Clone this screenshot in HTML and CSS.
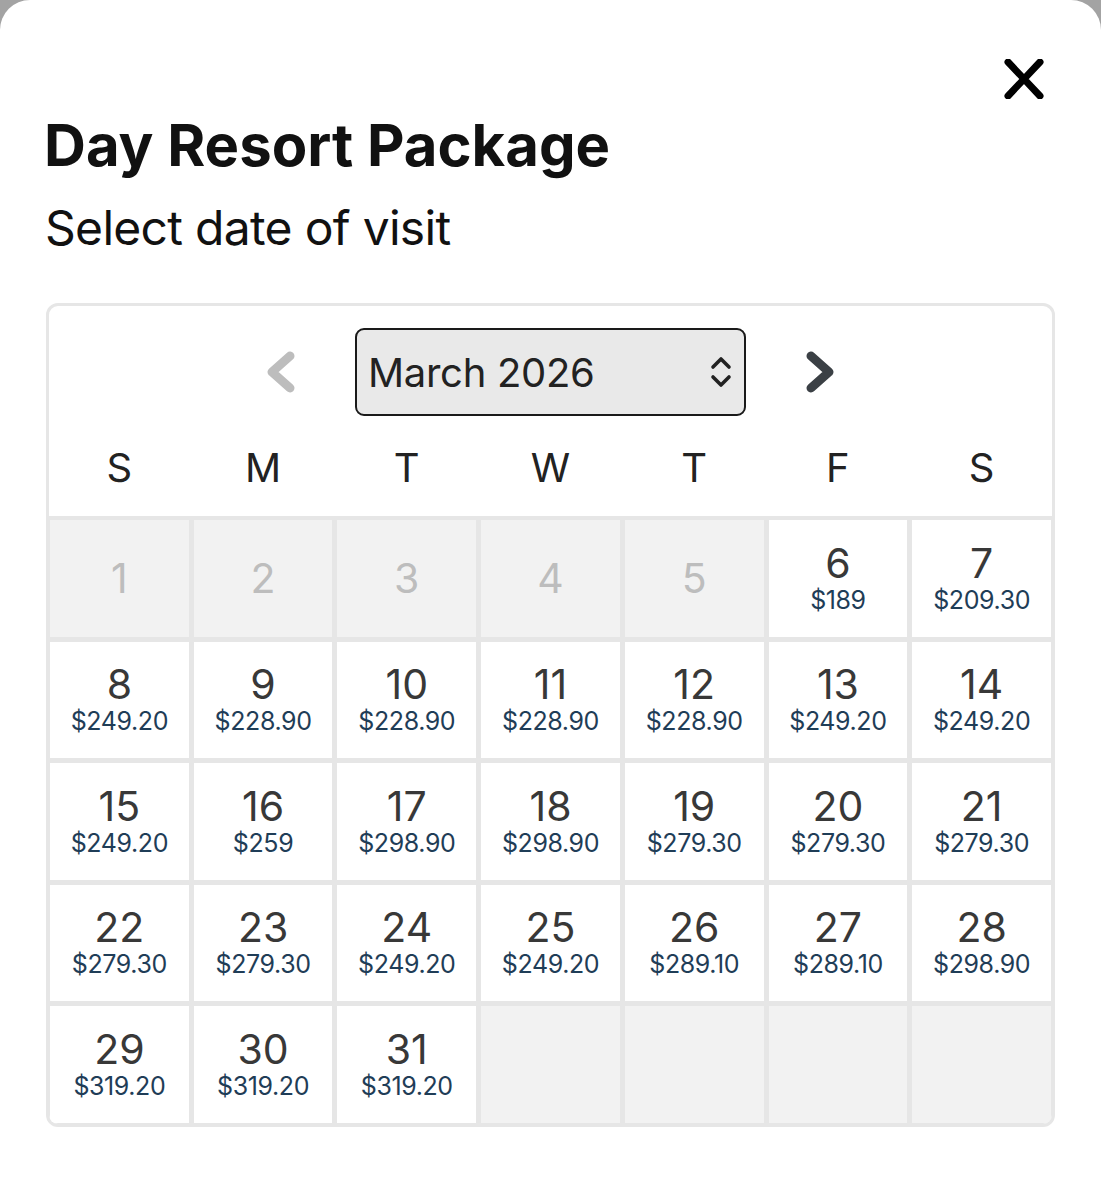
FILE: index.html
```html
<!DOCTYPE html>
<html lang="en">
<head>
<meta charset="utf-8">
<title>Day Resort Package</title>
<link rel="stylesheet" href="styles.css">
</head>
<body>
<div class="modal">
  <div class="close-row">
    <button class="close" aria-label="Close">
      <svg width="40" height="40" viewBox="0 0 40 40"><path d="M4 3 L36 37 M36 3 L4 37" stroke="#000" stroke-width="7" stroke-linecap="round" fill="none"/></svg>
    </button>
  </div>
  <h1 class="title">Day Resort Package</h1>
  <p class="subtitle">Select date of visit</p>

  <div class="calendar">
    <div class="cal-head">
      <button class="nav nav-prev" aria-label="Previous month">
        <svg width="40" height="44" viewBox="0 0 40 44"><path d="M30 6 L12 22 L30 38" stroke="#bdbdbd" stroke-width="9" stroke-linecap="round" stroke-linejoin="round" fill="none"/></svg>
      </button>
      <div class="month-select">
        <span>March 2026</span>
        <svg class="updown" width="26" height="34" viewBox="0 0 26 34"><path d="M5 12 L13 4 L21 12 M5 22 L13 30 L21 22" stroke="#222" stroke-width="3.6" stroke-linecap="round" stroke-linejoin="round" fill="none"/></svg>
      </div>
      <button class="nav nav-next" aria-label="Next month">
        <svg width="40" height="44" viewBox="0 0 40 44"><path d="M10 6 L28 22 L10 38" stroke="#3b4045" stroke-width="9" stroke-linecap="round" stroke-linejoin="round" fill="none"/></svg>
      </button>
    </div>
    <div class="weekdays">
      <span>S</span><span>M</span><span>T</span><span>W</span><span>T</span><span>F</span><span>S</span>
    </div>
    <div class="grid">
      <div class="cell off"><span class="num">1</span></div>
      <div class="cell off"><span class="num">2</span></div>
      <div class="cell off"><span class="num">3</span></div>
      <div class="cell off"><span class="num">4</span></div>
      <div class="cell off"><span class="num">5</span></div>
      <div class="cell"><span class="num">6</span><span class="price">$189</span></div>
      <div class="cell"><span class="num">7</span><span class="price">$209.30</span></div>

      <div class="cell"><span class="num">8</span><span class="price">$249.20</span></div>
      <div class="cell"><span class="num">9</span><span class="price">$228.90</span></div>
      <div class="cell"><span class="num">10</span><span class="price">$228.90</span></div>
      <div class="cell"><span class="num">11</span><span class="price">$228.90</span></div>
      <div class="cell"><span class="num">12</span><span class="price">$228.90</span></div>
      <div class="cell"><span class="num">13</span><span class="price">$249.20</span></div>
      <div class="cell"><span class="num">14</span><span class="price">$249.20</span></div>

      <div class="cell"><span class="num">15</span><span class="price">$249.20</span></div>
      <div class="cell"><span class="num">16</span><span class="price">$259</span></div>
      <div class="cell"><span class="num">17</span><span class="price">$298.90</span></div>
      <div class="cell"><span class="num">18</span><span class="price">$298.90</span></div>
      <div class="cell"><span class="num">19</span><span class="price">$279.30</span></div>
      <div class="cell"><span class="num">20</span><span class="price">$279.30</span></div>
      <div class="cell"><span class="num">21</span><span class="price">$279.30</span></div>

      <div class="cell"><span class="num">22</span><span class="price">$279.30</span></div>
      <div class="cell"><span class="num">23</span><span class="price">$279.30</span></div>
      <div class="cell"><span class="num">24</span><span class="price">$249.20</span></div>
      <div class="cell"><span class="num">25</span><span class="price">$249.20</span></div>
      <div class="cell"><span class="num">26</span><span class="price">$289.10</span></div>
      <div class="cell"><span class="num">27</span><span class="price">$289.10</span></div>
      <div class="cell"><span class="num">28</span><span class="price">$298.90</span></div>

      <div class="cell"><span class="num">29</span><span class="price">$319.20</span></div>
      <div class="cell"><span class="num">30</span><span class="price">$319.20</span></div>
      <div class="cell"><span class="num">31</span><span class="price">$319.20</span></div>
      <div class="cell empty"></div>
      <div class="cell empty"></div>
      <div class="cell empty"></div>
      <div class="cell empty"></div>
    </div>
  </div>
</div>
</body>
</html>
```
FILE: styles.css
```css
* { box-sizing: border-box; }
html, body {
  margin: 0;
  padding: 0;
  background: #a3a3a3;
}
body {
  font-family: Inter, "Noto Sans", sans-serif;
  color: #111;
}
.modal {
  background: #fff;
  border-radius: 30px 30px 0 0;
  min-height: 1200px;
  padding: 59px 46px 40px 46px;
}
.close-row {
  display: flex;
  justify-content: flex-end;
  padding-right: 11px;
}
.close {
  width: 40px;
  height: 40px;
  padding: 0;
  border: 0;
  background: none;
  display: block;
}
.close svg { display: block; }
.title {
  margin: 12px 0 0 -2px;
  font-size: 58px;
  line-height: 69.6px;
  font-weight: 700;
  letter-spacing: 0;
  color: #111;
}
.subtitle {
  margin: 18px 0 0 -1px;
  font-size: 48px;
  line-height: 57.6px;
  font-weight: 400;
  letter-spacing: -0.7px;
  color: #111;
}
.calendar {
  margin-top: 47px;
  border: 3px solid #e6e6e6;
  border-radius: 12px;
  overflow: hidden;
  background: #fff;
}
.cal-head {
  display: flex;
  justify-content: center;
  align-items: center;
  gap: 55px;
  padding-top: 22px;
}
.nav {
  width: 40px;
  height: 44px;
  padding: 0;
  border: 0;
  background: none;
}
.nav svg { display: block; }
.month-select {
  width: 391px;
  height: 88px;
  border: 2px solid #1a1a1a;
  border-radius: 9px;
  background: #e9e9e9;
  display: flex;
  align-items: center;
  justify-content: space-between;
  padding: 0 10px 0 11px;
  font-size: 40px;
  letter-spacing: -0.3px;
  color: #222;
}
.updown { display: block; }
.weekdays {
  display: grid;
  grid-template-columns: repeat(7, 1fr);
  margin-top: 28px;
  padding: 0 1px;
  column-gap: 5px;
  font-size: 40px;
  line-height: 48px;
  text-align: center;
  color: #222;
  height: 72px;
}
.grid {
  display: grid;
  grid-template-columns: repeat(7, 1fr);
  grid-auto-rows: 116.5px;
  gap: 5px;
  padding: 4px 1px 1px 1px;
  background: #e6e6e6;
}
.cell {
  background: #fff;
  display: flex;
  flex-direction: column;
  align-items: center;
  justify-content: center;
}
.cell.off, .cell.empty { background: #f2f2f2; }
.num {
  font-size: 41px;
  line-height: 41px;
  color: #383838;
}
.cell.off .num { color: #bdbdbd; }
.price {
  font-size: 25px;
  line-height: 32px;
  letter-spacing: -0.4px;
  color: #1f3d57;
  margin-bottom: -2px;
}
```
